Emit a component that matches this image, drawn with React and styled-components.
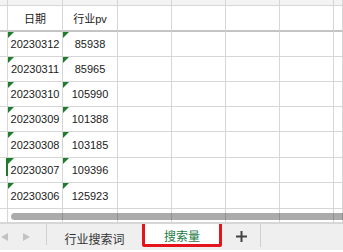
import styled, { createGlobalStyle, css } from "styled-components";

const GlobalStyle = createGlobalStyle`
  html, body {
    margin: 0;
    padding: 0;
    background: #fff;
  }
  body {
    font-family: "Liberation Sans", "Noto Sans CJK SC", sans-serif;
  }
`;

const Page = styled.div`
  width: 343px;
  height: 252px;
  display: flex;
  flex-direction: column;
  overflow: hidden;
  background: #fff;
`;

const SheetArea = styled.div`
  position: relative;
  height: 224px;
  overflow: hidden;
`;

const Sheet = styled.div`
  display: grid;
  grid-template-columns: 8px 55px 55px 54px 54px 54px 54px 1fr;
  grid-template-rows: 6px 26px 25px 25px 25px 25px 26px 25px 26px 1fr;
  height: 100%;
`;

const Cell = styled.div`
  position: relative;
  box-sizing: border-box;
  border-right: 1px solid #d6d6d6;
  border-bottom: 1px solid #d6d6d6;
  display: flex;
  align-items: center;
  justify-content: center;
  font-size: 11px;
  color: #1a1a1a;
  white-space: nowrap;
  background: ${({ $top }) => ($top ? "#f3f3f3" : "#fff")};
  ${({ $header }) =>
    $header &&
    css`
      border-bottom: 2px solid #c4c4c4;
    `}
  ${({ $flag }) =>
    $flag &&
    css`
      &::before {
        content: "";
        position: absolute;
        left: 0;
        top: 0;
        border-top: 6px solid #1d7d2d;
        border-right: 6px solid transparent;
      }
    `}
  ${({ $marked }) =>
    $marked &&
    css`
      &::after {
        content: "";
        position: absolute;
        left: -2px;
        top: 0;
        width: 2px;
        height: 18px;
        background: #1d7d2d;
      }
    `}
`;

const Scrollbar = styled.div`
  position: absolute;
  left: 11px;
  right: -4px;
  top: 213px;
  height: 7px;
  border-radius: 4px;
  background: rgba(0, 0, 0, 0.33);
`;

const TabBar = styled.div`
  display: flex;
  height: 26px;
  background: #efefef;
`;

const NavGroup = styled.div`
  width: 45px;
  height: 21px;
  border-right: 1px solid #cfcfcf;
  display: flex;
  align-items: center;
  gap: 15px;
  padding-left: 1px;
`;

const Arrow = styled.span`
  width: 0;
  height: 0;
  border-top: 4px solid transparent;
  border-bottom: 4px solid transparent;
  ${({ $dir }) =>
    $dir === "left"
      ? css`
          border-right: 7px solid #c2c2c2;
        `
      : css`
          border-left: 7px solid #c2c2c2;
        `}
  margin-top: 4px;
`;

const Tab = styled.div`
  box-sizing: border-box;
  display: flex;
  align-items: center;
  justify-content: center;
  font-size: 12px;
  color: #333;
  width: ${({ $w }) => $w}px;
  padding-top: 2px;
  height: 26px;
  ${({ $active }) =>
    $active &&
    css`
      margin-top: -5px;
      height: 28px;
      padding-top: 5px;
      border: 3px solid #e5141c;
      border-radius: 2px;
      background: #fff;
      color: #1e7b45;
    `}
`;

const AddButton = styled.div`
  width: 38px;
  height: 21px;
  border-right: 1px solid #cfcfcf;
  display: flex;
  align-items: center;
  justify-content: center;
  padding-top: 2px;
`;

const dates = [
  ["20230312", "85938"],
  ["20230311", "85965"],
  ["20230310", "105990"],
  ["20230309", "101388"],
  ["20230308", "103185"],
  ["20230307", "109396"],
  ["20230306", "125923"],
];

const EMPTY = 6;

const blanks = (n, props = {}) =>
  Array.from({ length: n }, (_, i) => <Cell key={`b${i}`} {...props} />);

export default function App() {
  return (
    <Page>
      <GlobalStyle />
      <SheetArea>
        <Sheet>
          {Array.from({ length: 8 }, (_, i) => (
            <Cell key={`t${i}`} $top />
          ))}

          <Cell $header />
          <Cell $header>日期</Cell>
          <Cell $header>行业pv</Cell>
          {blanks(5, { $header: true })}

          {dates.map(([d, v], i) => (
            <Row key={d} date={d} value={v} marked={i === 5} />
          ))}

          {blanks(8)}
          {blanks(8)}
        </Sheet>
        <Scrollbar />
      </SheetArea>
      <TabBar>
        <NavGroup>
          <Arrow $dir="left" />
          <Arrow $dir="right" />
        </NavGroup>
        <Tab $w={95}>行业搜索词</Tab>
        <Tab $w={80} $active>
          搜索量
        </Tab>
        <AddButton>
          <svg width="11" height="11" viewBox="0 0 11 11">
            <path d="M5.5 0v11M0 5.5h11" stroke="#444" strokeWidth="2" />
          </svg>
        </AddButton>
      </TabBar>
    </Page>
  );
}

const Row = ({ date, value, marked }) => (
  <>
    <Cell />
    <Cell $flag $marked={marked}>
      {date}
    </Cell>
    <Cell $flag>{value}</Cell>
    {blanks(EMPTY - 1)}
  </>
);
